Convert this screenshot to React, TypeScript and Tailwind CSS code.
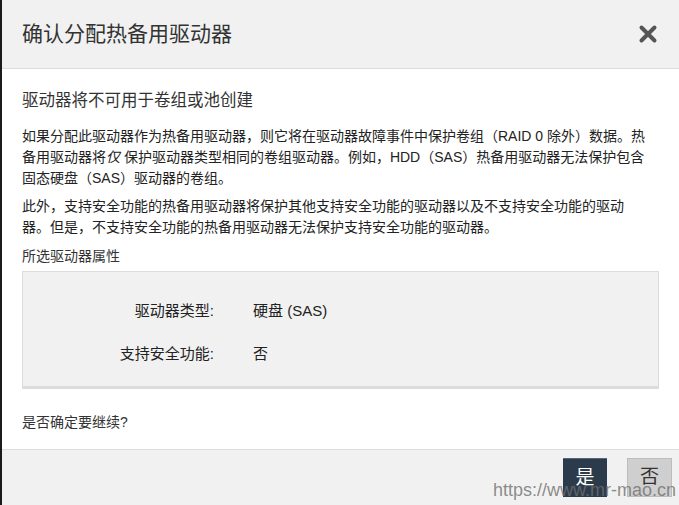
import React from 'react';

const font = { fontFamily: '"Liberation Sans", "Noto Sans CJK SC", sans-serif' };

const CloseIcon = () => (
  <svg width="20" height="20" viewBox="0 0 20 20" className="text-[#555]">
    <path d="M3.5 3.5 L16.5 16.5 M16.5 3.5 L3.5 16.5" stroke="currentColor" strokeWidth="4" strokeLinecap="round" />
  </svg>
);

const PropRow = ({ label, value }: { label: string; value: string }) => (
  <div className="flex h-[22px] items-center text-[15px] leading-[22px] text-[#222]">
    <div className="w-[191px] text-right">{label}</div>
    <div className="ml-[39px]">{value}</div>
  </div>
);

export default function App() {
  return (
    <div className="relative flex h-[505px] w-[679px] overflow-hidden bg-white" style={font}>
      <div className="w-[2px] shrink-0 bg-[#1b1b1b]" />

      <div className="flex flex-1 flex-col">
        {/* Header */}
        <div className="flex h-[69px] shrink-0 items-center justify-between border-b border-[#dcdcdc] bg-[#f1f1f1] pl-[20px] pr-[21px]">
          <h2 className="text-[21px] leading-[28px] text-[#333]">确认分配热备用驱动器</h2>
          <CloseIcon />
        </div>

        {/* Body */}
        <div className="flex-1 px-[20px] pt-[19px]">
          <h3 className="text-[16.5px] leading-[24px] text-[#333]">驱动器将不可用于卷组或池创建</h3>

          <p className="mt-[14px] whitespace-nowrap text-[14px] leading-[21px] text-[#222]">
            如果分配此驱动器作为热备用驱动器，则它将在驱动器故障事件中保护卷组（RAID 0 除外）数据。热
            <br />
            备用驱动器将<i>仅</i> 保护驱动器类型相同的卷组驱动器。例如，HDD（SAS）热备用驱动器无法保护包含
            <br />
            固态硬盘（SAS）驱动器的卷组。
          </p>

          <p className="mt-[7px] whitespace-nowrap text-[14px] leading-[21px] text-[#222]">
            此外，支持安全功能的热备用驱动器将保护其他支持安全功能的驱动器以及不支持安全功能的驱动
            <br />
            器。但是，不支持安全功能的热备用驱动器无法保护支持安全功能的驱动器。
          </p>

          <div className="mt-[8px] text-[14px] leading-[21px] text-[#333]">所选驱动器属性</div>

          <div className="mt-[4px] border border-b-[3px] border-[#dcdcdc] bg-[#f1f1f1] pb-[21px] pt-[28px]">
            <PropRow label="驱动器类型:" value="硬盘 (SAS)" />
            <div className="mt-[21px]">
              <PropRow label="支持安全功能:" value="否" />
            </div>
          </div>

          <div className="mt-[23px] text-[14px] leading-[21px] text-[#333]">是否确定要继续?</div>
        </div>

        {/* Footer */}
        <div className="flex h-[56px] shrink-0 items-start justify-end gap-[20px] border-t border-[#dcdcdc] bg-[#f1f1f1] pr-[7px] pt-[8px]">
          <button className="h-[39px] w-[44px] border-t border-[#56677a] bg-[#2c3b4b] text-[19px] text-white">是</button>
          <button className="h-[39px] w-[45px] border border-[#bdbdbd] bg-[#cfcfcf] text-[19px] text-[#333]">否</button>
        </div>
      </div>

      <span className="pointer-events-none absolute bottom-[4px] right-[3px] text-[18px] leading-[22px] text-[#6f6f6f]/80">
        https://www.mr-mao.cn
      </span>
    </div>
  );
}
